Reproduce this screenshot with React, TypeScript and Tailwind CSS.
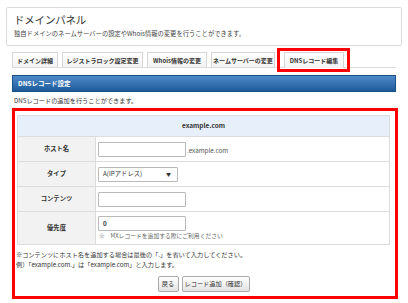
import React from "react";

const font = { fontFamily: '"Noto Sans CJK JP", "Noto Sans", sans-serif' };

function Tab({ w, label, className = "" }: { w: string; label: string; className?: string }) {
  return (
    <div
      className={`${w} h-[15px] border border-[#d6d6d6] border-b-0 bg-gradient-to-b from-white to-[#f3f3f3] flex items-center justify-center text-[6px] font-bold text-[#333] whitespace-nowrap ${className}`}
    >
      {label}
    </div>
  );
}

function Row({ label, h, children }: { label: string; h: string; children: React.ReactNode }) {
  return (
    <div className={`flex ${h} border-t border-[#dcdcdc]`}>
      <div className="w-[78px] shrink-0 bg-[#f2f2f2] border-r border-[#dcdcdc] flex items-center justify-center text-[6.3px] font-bold">
        {label}
      </div>
      <div className="flex-1 pl-[2px] flex flex-col justify-center">{children}</div>
    </div>
  );
}

function Input({ value = "" }: { value?: string }) {
  return (
    <div className="w-[88px] h-[15px] border border-[#b9b9b9] rounded-[1px] bg-white flex items-center pl-[4px] text-[6.3px] font-bold">
      {value}
    </div>
  );
}

export default function App() {
  return (
    <div style={font} className="w-[408px] h-[303px] bg-white overflow-hidden text-[#333]">
      <div className="pt-[7px] px-[6px]">
        <div className="h-[39px] border border-[#dadada] rounded-[2px] pl-[7px]">
          <div className="text-[10.5px] leading-[12px] pt-[6px] tracking-[-0.2px]">ドメインパネル</div>
          <div className="text-[6.3px] leading-[8px] mt-[4px] text-[#444]">
            独自ドメインのネームサーバーの設定やWhois情報の変更を行うことができます。
          </div>
        </div>
      </div>

      <div className="px-[12px]">
        <div className="mt-[2px] h-[20px] flex items-start gap-[4px] border-b border-[#dcdcdc]">
          <Tab w="w-[46px]" label="ドメイン詳細" className="mt-[4px]" />
          <Tab w="w-[81px]" label="レジストラロック設定変更" className="mt-[4px]" />
          <Tab w="w-[60px]" label="Whois情報の変更" className="mt-[4px]" />
          <Tab w="w-[64px]" label="ネームサーバーの変更" className="mt-[4px]" />
          <div className="shrink-0 h-[24px] border-[3px] border-[#f00] pl-[4px] pr-[3px] pt-[1px] -ml-[2px]">
            <Tab w="w-[60px]" label="DNSレコード編集" className="h-[16px]" />
          </div>
        </div>

        <div className="mt-[7px] h-[17px] bg-gradient-to-b from-[#4d8ac8] to-[#1e5b9b] border border-[#1b4f88] flex items-center pl-[5px] text-white text-[6.5px] font-bold">
          DNSレコード設定
        </div>

        <div className="mt-[5px] pl-[2px] text-[6.2px] leading-[8px]">DNSレコードの追加を行うことができます。</div>

        <div className="mt-[3px] -mr-[2px] h-[191px] border-[3px] border-[#f00] pl-[2px] pr-[5px] pt-[4px]">
          <div className="border border-[#dcdcdc] border-t-0">
            <div className="h-[21px] bg-[#e7f0fa] border-t border-[#dcdcdc] flex items-center justify-center text-[6.5px] font-bold">
              example.com
            </div>
            <Row label="ホスト名" h="h-[25px]">
              <div className="flex items-center">
                <Input />
                <span className="text-[6.3px] leading-[8px] ml-[1px] mt-[3px] text-[#555]">.example.com</span>
              </div>
            </Row>
            <Row label="タイプ" h="h-[25px]">
              <div className="w-[80px] h-[15px] border border-[#b9b9b9] rounded-[1px] bg-white flex items-center justify-between pl-[4px] pr-[6px] text-[6.3px]">
                <span>A(IPアドレス)</span>
                <span className="text-[5px]">▼</span>
              </div>
            </Row>
            <Row label="コンテンツ" h="h-[25px]">
              <Input />
            </Row>
            <Row label="優先度" h="h-[33px]">
              <Input value="0" />
              <div className="text-[5.8px] leading-[8px] mt-[1px] text-[#666] pl-[1px]">※　MXレコードを追加する際にご利用ください</div>
            </Row>
          </div>

          <div className="mt-[5px] text-[6.2px] leading-[10px] -ml-[1px]">
            <div>※コンテンツにホスト名を追加する場合は最後の「.」を省いて入力してください。</div>
            <div>例）「example.com.」は「example.com」と入力します。</div>
          </div>

          <div className="mt-[6px] flex justify-center gap-[3px]">
            <div className="w-[21px] h-[16px] border border-[#aaa] rounded-[2px] bg-gradient-to-b from-white to-[#e2e2e2] flex items-center justify-center text-[6.2px]">
              戻る
            </div>
            <div className="w-[68px] h-[16px] border border-[#aaa] rounded-[2px] bg-gradient-to-b from-white to-[#e2e2e2] flex items-center justify-center text-[6.2px]">
              レコード追加（確認）
            </div>
          </div>
        </div>
      </div>
    </div>
  );
}
